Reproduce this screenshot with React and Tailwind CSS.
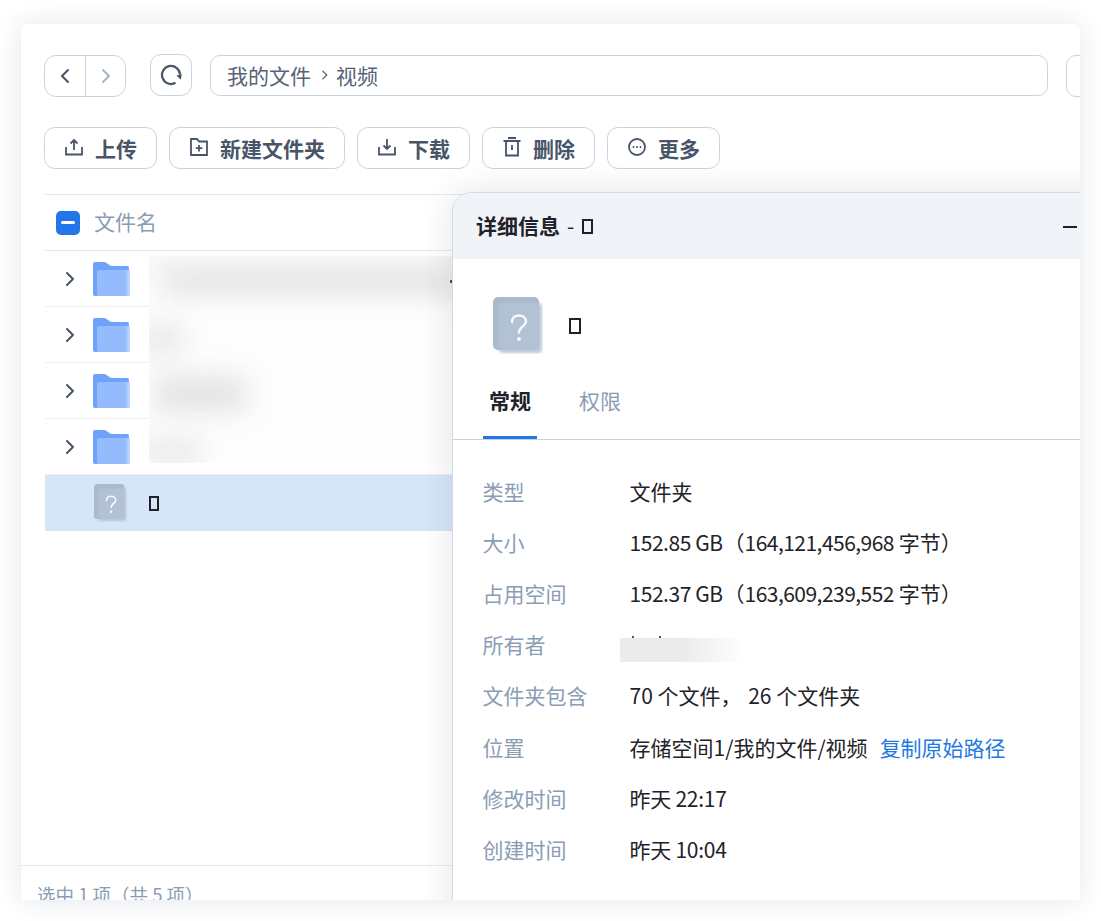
import React from "react";

const font = { fontFamily: '"Noto Sans CJK SC", "Noto Sans", sans-serif' };

function Tofu({ className = "" }) {
  return <span aria-label="□" className={"inline-block border-2 border-[#1f2329] " + className} />;
}

function FolderIcon() {
  return (
    <svg width="40" height="36" viewBox="0 0 40 36" className="flex-none">
      <defs>
        <linearGradient id="ff" x1="0" x2="1" y1="0" y2="0">
          <stop offset="0.85" stopColor="#93bbfd" />
          <stop offset="1" stopColor="#c6dafd" />
        </linearGradient>
      </defs>
      <path d="M1 3a2 2 0 0 1 2-2h10l6 4h16a2 2 0 0 1 2 2v26a2 2 0 0 1-2 2H3a2 2 0 0 1-2-2z" fill="#6ea3fb" />
      <path d="M5 11a2 2 0 0 1 2-2h31v26H7a2 2 0 0 1-2-2z" fill="url(#ff)" />
    </svg>
  );
}

function UnknownIcon({ size }) {
  const id = "u" + size;
  return (
    <svg width={size} height={size * 1.14} viewBox="0 0 50 57" className="flex-none">
      <defs>
        <filter id={id} x="-20%" y="-20%" width="140%" height="140%">
          <feGaussianBlur stdDeviation="1.6" />
        </filter>
      </defs>
      <rect x="0" y="0" width="46" height="53" rx="5" fill="#a9bacd" />
      <rect x="6" y="6" width="43" height="50" rx="4" fill="#b3c2d4" filter={`url(#${id})`} opacity="0.9" />
      <path d="M19 25c0-4 3-6.500 7-6.500s7 2.500 7 6c0 5-7 5-7 11" fill="none" stroke="#f8fafc" strokeWidth="2.400" strokeLinecap="round" />
      <circle cx="26" cy="42" r="1.900" fill="#f8fafc" />
    </svg>
  );
}

function ActionButton({ icon, label, width }) {
  return (
    <button className={"h-[42px] flex-none flex items-center justify-center gap-[11px] rounded-[11px] border border-[#c9d4e2] bg-white text-[21px] font-bold text-[#475569] " + width}>
      <span className="flex-none w-[20px] h-[20px] -mt-[3px]">{icon}</span>
      <span className="mt-[1px]">{label}</span>
    </button>
  );
}

const stroke = { fill: "none", stroke: "#475569", strokeWidth: 1.8 };

const icons = {
  upload: (
    <svg viewBox="0 0 20 20" className="w-full h-full" {...stroke}>
      <path d="M2 10v7.500h16V10M10 13V3M6.500 6.500 10 3l3.500 3.500" />
    </svg>
  ),
  folder: (
    <svg viewBox="0 0 20 20" className="w-full h-full" {...stroke}>
      <path d="M2 2h6l2 2.500h8V18H2zM10 8v6.500M6.700 11.200h6.600" />
    </svg>
  ),
  download: (
    <svg viewBox="0 0 20 20" className="w-full h-full" {...stroke}>
      <path d="M2 10v7.500h16V10M10 2v10M6.500 8.500 10 12l3.500-3.500" />
    </svg>
  ),
  trash: (
    <svg viewBox="0 0 20 20" className="w-full h-full" {...stroke}>
      <path d="M1.500 4h17M6 1h8M4 4v14.500h12V4M10 8v5" />
    </svg>
  ),
  more: (
    <svg viewBox="0 0 20 20" className="w-full h-full">
      <circle cx="10" cy="10" r="8" {...stroke} />
      <circle cx="6.500" cy="10" r="1" fill="#475569" />
      <circle cx="10" cy="10" r="1" fill="#475569" />
      <circle cx="13.500" cy="10" r="1" fill="#475569" />
    </svg>
  ),
};

function Chevron({ dir, color, className = "" }) {
  const d = dir === "left" ? "M9 2 3 8l6 6" : "M4 2l6 6-6 6";
  return (
    <svg width="13" height="16" viewBox="0 0 13 16" className={"flex-none " + className}>
      <path d={d} fill="none" stroke={color} strokeWidth="2" strokeLinecap="round" strokeLinejoin="round" />
    </svg>
  );
}

function FolderRow() {
  return (
    <div className="h-[56px] flex-none flex items-center border-b border-[#eef0f4]">
      <Chevron dir="right" color="#475569" className="ml-[18px]" />
      <span className="ml-[16px]"><FolderIcon /></span>
    </div>
  );
}

function InfoRow({ label, children }) {
  return (
    <div className="h-[51.15px] flex items-center">
      <div className="w-[147px] flex-none text-[#8a9db5]">{label}</div>
      <div className="flex items-center text-[#1f2329] whitespace-nowrap">{children}</div>
    </div>
  );
}

export default function App() {
  return (
    <div className="w-[1101px] h-[921px] bg-white pt-[24px] pl-[21px] overflow-hidden" style={font}>
      <div className="relative w-[1059px] h-[876px] bg-white rounded-t-[5px] overflow-hidden shadow-[0_0_26px_rgba(30,50,90,0.12)] flex flex-col text-[21px]">
        {/* nav bar */}
        <div className="flex items-start pl-[23px] pt-[30px] flex-none">
          <div className="mt-[1px] w-[82px] h-[42px] flex rounded-[12px] border border-[#c9d4e2] flex-none">
            <div className="w-[41px] flex items-center justify-center border-r border-[#c9d4e2]">
              <Chevron dir="left" color="#475569" />
            </div>
            <div className="flex-1 flex items-center justify-center">
              <Chevron dir="right" color="#a3b6cc" />
            </div>
          </div>
          <div className="ml-[24px] w-[42px] h-[42px] rounded-[11px] border border-[#c9d4e2] flex items-center justify-center flex-none">
            <svg width="22" height="22" viewBox="0 0 22 22">
              <path d="M15.500 18.800A9 9 0 1 1 20 10.500" fill="none" stroke="#475569" strokeWidth="2.200" />
              <path d="M16.500 11.500 21.800 10 20.800 15.800z" fill="#475569" />
            </svg>
          </div>
          <div className="mt-[1px] ml-[18px] w-[838px] h-[41px] rounded-[10px] border border-[#c9d4e2] flex items-center pl-[16px] text-[#566377] flex-none">
            <span>我的文件</span>
            <Chevron dir="right" color="#566377" className="ml-[7px] mr-[1px] scale-[0.65] -mt-[1px]" />
            <span className="ml-[4px]">视频</span>
          </div>
          <div className="mt-[1px] ml-[18px] w-[60px] h-[42px] rounded-[10px] border border-[#c9d4e2] flex-none" />
        </div>

        {/* toolbar */}
        <div className="flex items-center gap-[12px] pl-[23px] mt-[30px] flex-none">
          <ActionButton icon={icons.upload} label="上传" width="w-[113px]" />
          <ActionButton icon={icons.folder} label="新建文件夹" width="w-[176px]" />
          <ActionButton icon={icons.download} label="下载" width="w-[113px]" />
          <ActionButton icon={icons.trash} label="删除" width="w-[113px]" />
          <ActionButton icon={icons.more} label="更多" width="w-[113px]" />
        </div>

        {/* table */}
        <div className="ml-[24px] mt-[25px] flex-1 min-h-0 flex flex-col border-t border-[#e4e8ee]">
          <div className="h-[56px] flex-none flex items-center border-b border-[#e4e8ee]">
            <div className="ml-[11px] w-[24px] h-[24px] rounded-[5px] bg-[#2276e8] flex items-center justify-center flex-none">
              <div className="w-[14px] h-[3px] rounded-full bg-white" />
            </div>
            <span className="ml-[14px] -mt-[2px] text-[#8a9db5]">文件名</span>
          </div>
          <FolderRow />
          <FolderRow />
          <FolderRow />
          <FolderRow />
          <div className="h-[56px] flex-none flex items-center bg-[#d6e5f8]">
            <span className="ml-[49px]"><UnknownIcon size={33} /></span>
            <Tofu className="ml-[22px] w-[10px] h-[15px]" />
          </div>
        </div>

        {/* status */}
        <div className="h-[35px] flex-none border-t border-[#e4e8ee] pl-[16px] pt-[15px] text-[18.5px] leading-[26px] text-[#8a9db5] whitespace-nowrap">
          选中 1 项（共 5 项）
        </div>

        {/* blurred file names */}
        <div className="absolute left-[128px] top-[232px] w-[303px] h-[207px] overflow-hidden bg-[#fdfdfd]">
          <div className="absolute left-[-10px] top-[-10px] w-[340px] h-[40px] bg-[#f6f6f6] blur-[14px]" />
          <div className="absolute left-[16px] top-[14px] w-[300px] h-[24px] bg-[#e4e4e4] blur-[12px]" />
          <div className="absolute left-[-6px] top-[68px] w-[40px] h-[30px] bg-[#e8e8e8] blur-[13px]" />
          <div className="absolute left-[6px] top-[122px] w-[90px] h-[32px] bg-[#e0e0e0] blur-[14px]" />
          <div className="absolute left-[-8px] top-[182px] w-[60px] h-[26px] bg-[#eaeaea] blur-[12px]" />
        </div>
        <div className="absolute left-[429px] top-[256px] w-[2px] h-[3px] bg-[#4a5260]" />

        {/* details panel */}
        <div className="absolute left-[431px] top-[168px] w-[680px] h-[760px] bg-white rounded-tl-[20px] border border-[#d5d9e0] shadow-[0_0_34px_rgba(30,40,70,0.12)] flex flex-col">
          <div className="h-[66px] flex-none bg-[#f0f3f8] rounded-tl-[20px] flex items-center pl-[23px]">
            <span className="font-bold text-[#1f2329]">详细信息</span>
            <span className="ml-[7px] text-[#1f2329]">-</span>
            <Tofu className="ml-[8px] w-[11px] h-[15px]" />
            <div className="absolute left-[610px] top-[33px] w-[14px] h-[2px] bg-[#1f2329]" />
          </div>
          <div className="h-[181px] flex-none flex flex-col border-b border-[#c9d4e2]">
            <div className="flex items-center pl-[40px] pt-[38px]">
              <UnknownIcon size={50} />
              <Tofu className="ml-[26px] w-[12px] h-[16px]" />
            </div>
            <div className="flex mt-auto pl-[30px] h-[62px]">
              <div className="w-[54px] flex flex-col items-center">
                <span className="flex-1 flex items-center pb-[12px] font-bold text-[#1f2329]">常规</span>
                <div className="w-full h-[3px] bg-[#2276e8]" />
              </div>
              <span className="ml-[42px] h-[59px] flex items-center pb-[12px] text-[#8a9db5]">权限</span>
            </div>
          </div>
          <div className="pl-[29.5px] pt-[26px]">
            <InfoRow label="类型">文件夹</InfoRow>
            <InfoRow label="大小">
              <span className="tracking-[-0.45px]">152.85 GB</span>
              <span className="ml-[1px]">（</span>
              <span className="tracking-[-0.53px]">164,121,456,968</span>&nbsp;字节）
            </InfoRow>
            <InfoRow label="占用空间">
              <span className="tracking-[-0.45px]">152.37 GB</span>
              <span className="ml-[1px]">（</span>
              <span className="tracking-[-0.53px]">163,609,239,552</span>&nbsp;字节）
            </InfoRow>
            <InfoRow label="所有者">
              <div className="relative -ml-[10px] w-[125px] h-[24px] mt-[10px] bg-gradient-to-r from-[#ebebeb] via-[#ebebeb] to-white">
                <span className="absolute left-[12px] -top-[2px] w-[2px] h-[2px] bg-[#555]" />
                <span className="absolute left-[39px] -top-[2px] w-[2px] h-[2px] bg-[#555]" />
              </div>
            </InfoRow>
            <InfoRow label="文件夹包含">
              <span>70 个文件，</span>
              <span className="ml-[2px]">&nbsp;26 个文件夹</span>
            </InfoRow>
            <InfoRow label="位置">
              存储空间1/我的文件/视频
              <span className="ml-[12px] text-[#1f7ae0]">复制原始路径</span>
            </InfoRow>
            <InfoRow label="修改时间"><span className="tracking-[-0.25px]">昨天 22:17</span></InfoRow>
            <InfoRow label="创建时间"><span className="tracking-[-0.25px]">昨天 10:04</span></InfoRow>
          </div>
        </div>
      </div>
    </div>
  );
}
